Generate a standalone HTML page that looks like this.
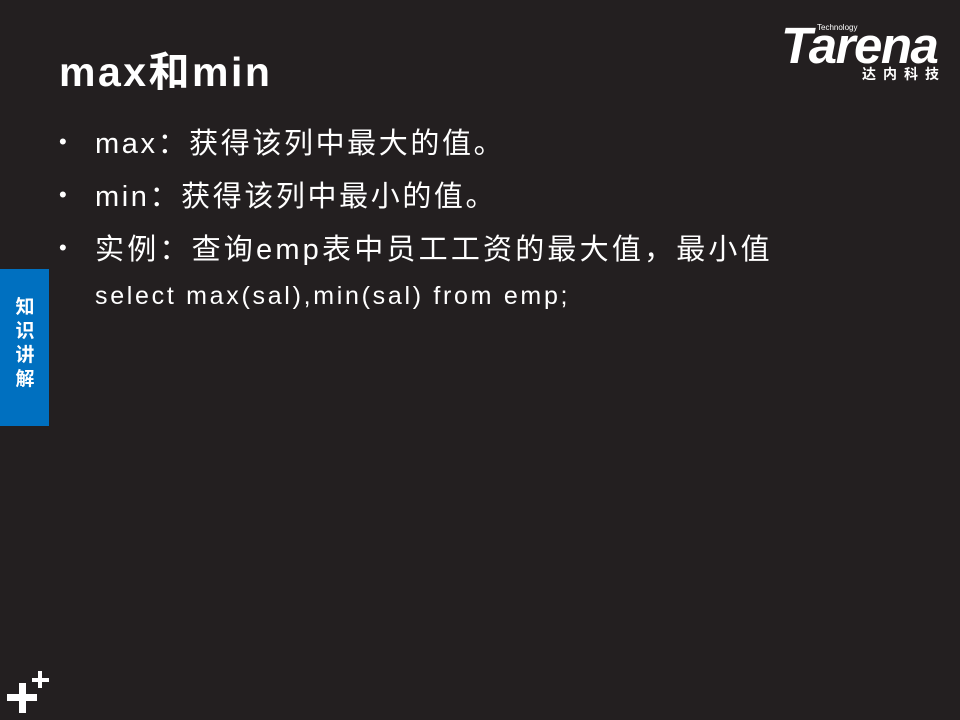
<!DOCTYPE html>
<html><head><meta charset="utf-8"><style>
body{margin:0;width:960px;height:720px;background:#231f20;position:relative;overflow:hidden;font-family:"Liberation Sans","Noto Sans CJK SC",sans-serif;color:#fff}
.a{position:absolute;white-space:nowrap}
.t{left:59px;top:38px;font-size:41px;font-weight:bold;letter-spacing:2.5px}
.b{left:95px;font-size:29px;letter-spacing:2.6px}
.d{left:59px;font-size:22px}
</style></head><body>
<div class="a t">max和min</div>
<div class="a d" style="top:129px">•</div><div class="a b" style="top:120px">max：获得该列中最大的值。</div>
<div class="a d" style="top:182px">•</div><div class="a b" style="top:173px">min：获得该列中最小的值。</div>
<div class="a d" style="top:235px">•</div><div class="a b" style="top:226px;letter-spacing:3.2px">实例：查询emp表中员工工资的最大值，最小值</div>
<div class="a" style="left:95px;top:282px;font-size:25px;letter-spacing:2.7px">select max(sal),min(sal) from emp;</div>
<div class="a" style="left:0;top:269px;width:49px;height:157px;background:#0070c0"></div>
<div class="a" style="left:13px;top:296px;width:24px;font-size:19px;font-weight:bold;line-height:24px;text-align:center;white-space:normal">知识讲解</div>
<div class="a" style="left:781px;top:18px;font-size:51px;font-weight:bold;font-style:italic;letter-spacing:-1.5px;line-height:56px">Tarena</div>
<div class="a" style="left:817px;top:23px;font-size:8px">Technology</div>
<div class="a" style="left:862px;top:64px;font-size:14px;font-weight:bold;letter-spacing:7px">达内科技</div>
<div class="a" style="left:7px;top:694px;width:30px;height:7px;background:#fff"></div>
<div class="a" style="left:19px;top:683px;width:7px;height:30px;background:#fff"></div>
<div class="a" style="left:32px;top:678px;width:17px;height:4px;background:#fff"></div>
<div class="a" style="left:38px;top:671px;width:4px;height:17px;background:#fff"></div>
</body></html>
